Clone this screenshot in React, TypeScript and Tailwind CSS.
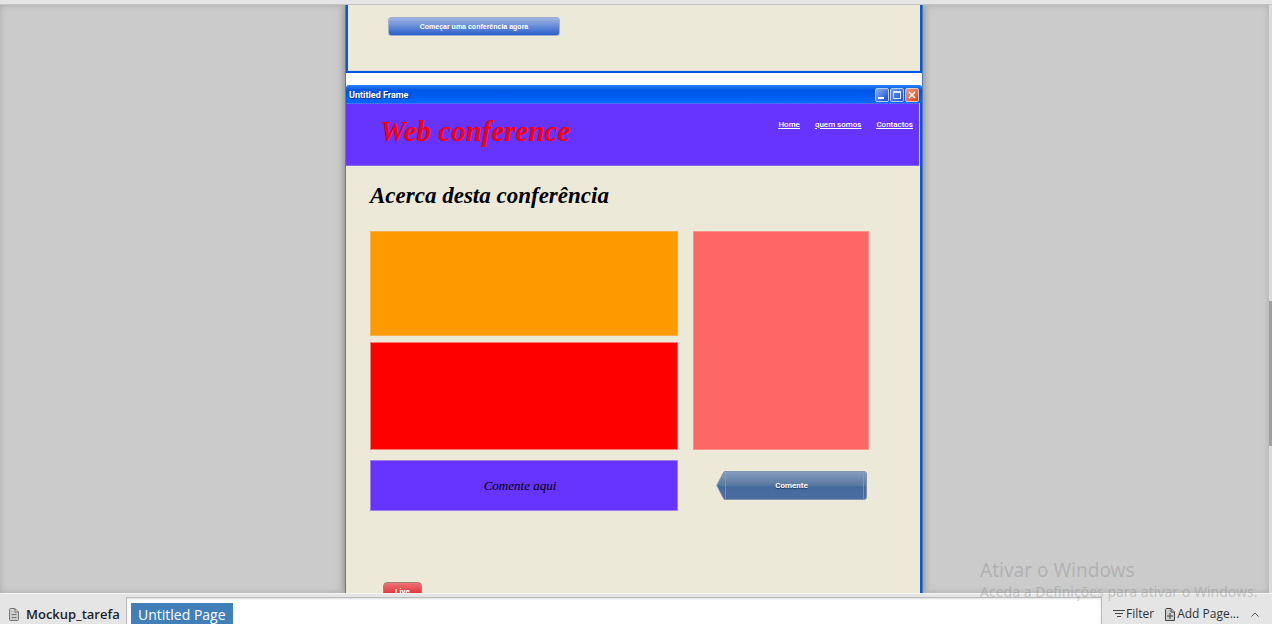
import React from "react";

function WindowControls() {
  return (
    <div className="flex gap-px">
      <button aria-label="Minimize" className="flex h-[14px] w-[14px] items-end rounded-[2px] border border-[#b9cdf8] bg-linear-to-br from-[#8fadf0] to-[#1846c8] p-[2px]">
        <span className="h-[2px] w-[6px] bg-white" />
      </button>
      <button aria-label="Maximize" className="flex h-[14px] w-[14px] items-center justify-center rounded-[2px] border border-[#b9cdf8] bg-linear-to-br from-[#6f9af0] to-[#1f50d0]">
        <span className="h-2 w-2 border border-t-2 border-[#dce6fb]" />
      </button>
      <button aria-label="Close" className="flex h-[14px] w-[14px] items-center justify-center rounded-[2px] border border-[#f0c8be] bg-linear-to-br from-[#f09a80] to-[#d83f10]">
        <svg viewBox="0 0 8 8" className="h-2 w-2" stroke="#fff" strokeWidth="1.6" fill="none">
          <path d="M1 1l6 6M7 1l-6 6" />
        </svg>
      </button>
    </div>
  );
}

function PreviousFrame() {
  return (
    <section className="h-[68px] shrink-0 border-x-2 border-b-2 border-[#0757e0] bg-[#ece9d8] pt-3 pl-10 shadow-[inset_0_-1px_0_#d8dfdf]">
      <button className="block h-[19px] w-[172px] rounded-[3px] border border-[#a2b0cf] bg-linear-to-b from-[#9fb4e4] to-[#2a5fca] text-center font-['Liberation_Sans',sans-serif] text-[7px] leading-4 font-bold text-white">
        Começar uma conferência agora
      </button>
    </section>
  );
}

function ConferenceFrame() {
  return (
    <section className="flex grow flex-col">
      <div className="flex h-[18px] shrink-0 items-center justify-between rounded-t-[3px] bg-linear-to-b from-[#2a86fb] via-[#0054e3] via-30% to-[#0068ff] pt-px pr-[3px] pl-[3px]">
        <h2 className="font-['Roboto',sans-serif] text-[9px] leading-4 font-bold text-white [text-shadow:1px_1px_0_#0b2f86]">Untitled Frame</h2>
        <WindowControls />
      </div>
      <div className="grow border-r-2 border-[#0757e0] bg-[#ece9d8] pr-px">
        <header className="flex h-[63px] items-start justify-between border-y border-[#8a67f4] border-t-[#4672f5] bg-[#6633ff] pr-[6px] pl-[34px]">
          <h1 className="pt-[9px] font-['Liberation_Serif',serif] text-[29px] leading-9 font-bold text-[#ff0000] italic">Web conference</h1>
          <nav className="flex gap-[15px] pt-[15px] font-['Roboto',sans-serif] text-[8px] leading-3 font-medium text-white underline">
            <a href="#home">Home</a>
            <a href="#quem-somos">quem somos</a>
            <a href="#contactos">Contactos</a>
          </nav>
        </header>
        <main className="pr-[50px] pl-6">
          <h2 className="pt-3 pb-[17px] font-['Liberation_Serif',serif] text-[23px] leading-9 font-bold text-black italic">Acerca desta conferência</h2>
          <div className="grid grid-cols-[7fr_4fr] gap-x-[15px] gap-y-[10px]">
            <div className="flex flex-col gap-[6px]">
              <div className="h-[105px] border border-[#f6b14e] bg-[#ff9900]" />
              <div className="h-[108px] border border-[#f87a70] bg-[#ff0000]" />
            </div>
            <div className="border border-[#f9938c] bg-[#ff6666]" />
            <div className="flex h-[51px] items-center justify-center border border-[#9f7fee] bg-[#6633ff] pr-2 font-['Liberation_Serif',serif] text-[13px] leading-4 text-black italic">
              Comente aqui
            </div>
            <button className="relative mt-[11px] mr-[2px] ml-[23px] h-[29px] font-['Roboto',sans-serif] text-[8px] leading-3 font-bold text-white [text-shadow:0_1px_1px_#1c3358]">
              <svg viewBox="0 0 151 29" preserveAspectRatio="none" className="absolute inset-0 h-full w-full">
                <defs>
                  <linearGradient id="tag" x1="0" y1="0" x2="0" y2="1">
                    <stop offset="0" stopColor="#879fbf" />
                    <stop offset=".5" stopColor="#57769f" />
                    <stop offset=".55" stopColor="#456a9d" />
                    <stop offset="1" stopColor="#4a6da0" />
                  </linearGradient>
                </defs>
                <path d="M.8 14.5 7.5 1.5Q8 .5 9 .5H148Q150.500 .5 150.500 3V26Q150.500 28.500 148 28.500H9Q8 28.500 7.500 27.500Z" fill="url(#tag)" stroke="#8094ad" />
                <path d="M9.500 1V28M147.500 1V28" stroke="#86a0c4" strokeOpacity=".7" />
              </svg>
              <span className="relative">Comente</span>
            </button>
          </div>
          <button className="mt-[71px] ml-[13px] block h-6 w-[39px] rounded-[4px] border border-[#a57f78] bg-linear-to-b from-[#ee7078] to-[#e00a20] to-60% pb-1 text-center font-['Roboto',sans-serif] text-[8px] leading-4 font-bold text-white">
            Live
          </button>
        </main>
      </div>
    </section>
  );
}

function BottomBar() {
  return (
    <footer className="z-10 flex h-[31px] shrink-0 border-t border-[#f6f6f6] bg-[#e5e5e5] font-['Open_Sans',sans-serif]">
      <div className="flex w-[126px] items-center gap-[7px] pt-[10px] pl-[9px] text-[13px] leading-5 font-semibold text-[#222]">
        <svg viewBox="0 0 10 13" className="h-[13px] w-[10px] shrink-0" fill="#ccc" stroke="#777">
          <path d="M.5 1.500Q.5.5 1.500.5H6L9.500 4V11.500Q9.500 12.500 8.500 12.500H1.500Q.5 12.500.5 11.500Z" />
          <path d="M6 .5V4H9.500M2.500 6.500H7.500M2.500 9.500H7.500" />
        </svg>
        <span>Mockup_tarefa</span>
      </div>
      <div className="mt-[3px] grow border border-b-0 border-[#bbb] bg-white pt-1 pl-1 shadow-[inset_0_1px_2px_#ddd]">
        <button className="h-6 bg-[#417fb8] px-[7px] text-[14px] leading-6 text-white">Untitled Page</button>
      </div>
      <div className="flex w-[170px] items-center pt-[10px] pl-[11px] text-[12px] leading-5 text-[#333]">
        <button className="flex items-center gap-px">
          <svg viewBox="0 0 12 8" className="h-2 w-3" stroke="#444" fill="none">
            <path d="M0 .5H12M2 3.500H10M4 6.500H8" />
          </svg>
          Filter
        </button>
        <button className="ml-[11px] flex items-center gap-[2px] whitespace-nowrap">
          <svg viewBox="0 0 10 13" className="h-[13px] w-[10px]" fill="#ccc" stroke="#444">
            <path d="M.5 1.500Q.5.5 1.500.5H6L9.500 4V12.500H.5Z" />
            <path d="M6 .5V4H9.500M5 5V11M2 8H8" />
          </svg>
          Add Page...
        </button>
        <button aria-label="Expand" className="ml-3">
          <svg viewBox="0 0 8 5" className="h-[5px] w-2" stroke="#555" fill="none">
            <path d="M.5 4.500 4 1 7.500 4.500" />
          </svg>
        </button>
      </div>
    </footer>
  );
}

export default function App() {
  return (
    <div className="relative flex h-screen flex-col overflow-hidden bg-[#e5e5e5]">
      <div className="h-[5px] shrink-0 border-b border-[#c4c4c4] bg-[#e5e5e5]" />
      <div className="flex min-h-0 grow">
        <div className="flex grow justify-center overflow-hidden bg-[#cbcbcb] pr-px shadow-[inset_0_0_6px_#aaa]">
          <div className="flex w-full max-w-[578px] flex-col gap-3 self-stretch overflow-hidden border-x border-[#4a7cb5] bg-white shadow-[0_0_8px_#777]">
            <PreviousFrame />
            <ConferenceFrame />
          </div>
        </div>
        <div className="w-[3px] shrink-0 bg-[#dcdcdc] pt-[296px]">
          <div className="h-[145px] bg-[#a0a0a0]" />
        </div>
      </div>
      <BottomBar />
      <div className="pointer-events-none absolute right-[7px] bottom-[22px] z-20 w-[285px] font-['Noto_Sans',sans-serif] whitespace-nowrap text-[#808080]/35">
        <p className="text-[19px] leading-6">Ativar o Windows</p>
        <p className="text-[14px] leading-5">Aceda a Definições para ativar o Windows.</p>
      </div>
    </div>
  );
}
